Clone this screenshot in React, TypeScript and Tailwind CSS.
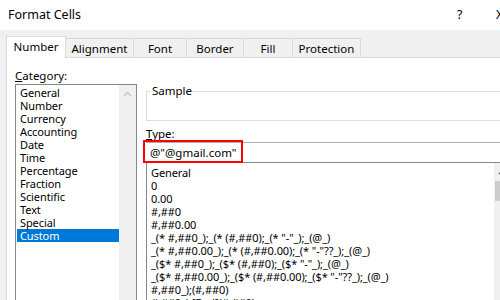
const categories = [
  "General",
  "Number",
  "Currency",
  "Accounting",
  "Date",
  "Time",
  "Percentage",
  "Fraction",
  "Scientific",
  "Text",
  "Special",
  "Custom",
];

const formats = [
  "General",
  "0",
  "0.00",
  "#,##0",
  "#,##0.00",
  '_(* #,##0_);_(* (#,##0);_(* "-"_);_(@_)',
  '_(* #,##0.00_);_(* (#,##0.00);_(* "-"??_);_(@_)',
  '_($* #,##0_);_($* (#,##0);_($* "-"_);_(@_)',
  '_($* #,##0.00_);_($* (#,##0.00);_($* "-"??_);_(@_)',
  "#,##0_);(#,##0)",
  "#,##0_);[Red](#,##0)",
];

const tabs = [
  { label: "Number", w: "w-[60px]" },
  { label: "Alignment", w: "w-[69px]" },
  { label: "Font", w: "w-[54px]" },
  { label: "Border", w: "w-[58px]" },
  { label: "Fill", w: "w-[50px]" },
  { label: "Protection", w: "w-[69px]" },
];

function ChevronUp({ color }: { color: string }) {
  return (
    <svg width="9" height="6" viewBox="0 0 9 6">
      <polyline points="1,5 4.5,1.5 8,5" fill="none" stroke={color} strokeWidth="1.3" />
    </svg>
  );
}

export default function App() {
  return (
    <div className="w-[500px] h-[300px] overflow-hidden bg-[#f0f0f0] text-black text-[11.5px] leading-[13px] font-['Noto_Sans',sans-serif]">
      {/* Title bar */}
      <div className="relative h-[30px] bg-white flex items-center pl-[8px]">
        <span className="text-[12.5px] leading-[16px]">Format Cells</span>
        <span className="absolute left-[457px] top-[7px] text-[12.5px] leading-[16px]">?</span>
        <span className="absolute left-[496px] top-[7px] text-[12.5px] leading-[16px]">X</span>
      </div>

      {/* Tabs */}
      <div className="flex items-end pl-[6px] h-[28px] -mb-px relative z-10">
        {tabs.map((t, i) =>
          i === 0 ? (
            <div
              key={t.label}
              className={`${t.w} h-[22px] bg-white border border-b-0 border-[#d9d9d9] flex items-center justify-center pb-[2px]`}
            >
              {t.label}
            </div>
          ) : (
            <div
              key={t.label}
              className={`${t.w} h-[20px] -ml-px border border-b-0 border-[#d9d9d9] flex items-center justify-center`}
            >
              {t.label}
            </div>
          )
        )}
      </div>

      {/* Panel */}
      <div className="ml-[6px] w-[520px] h-[300px] bg-white border-t border-l border-[#d9d9d9] flex pl-[8px] pt-[11px]">
        {/* Left column */}
        <div className="w-[122px] flex flex-col">
          <div className="h-[15px]">
            <u>C</u>ategory:
          </div>
          <div className="h-[240px] border border-[#828790] flex">
            <div className="flex-1 pl-px pt-px text-[11px] tracking-[-0.1px]">
              {categories.map((c) => (
                <div
                  key={c}
                  className={`h-[13px] pl-[3px] ${c === "Custom" ? "bg-[#0078d7] text-white" : ""}`}
                >
                  {c}
                </div>
              ))}
            </div>
            <div className="w-[17px] bg-[#f0f0f0] flex justify-center pt-[6px]">
              <ChevronUp color="#c3c3c3" />
            </div>
          </div>
        </div>

        {/* Right column */}
        <div className="ml-[9px] w-[370px] flex flex-col relative">
          <fieldset className="mt-[15px] h-[38px] border border-[#dcdcdc] px-[5px]">
            <legend className="px-px -ml-px leading-[14px]">Sample</legend>
          </fieldset>
          <div className="mt-[6px] h-[13px]">
            <u>T</u>ype:
          </div>
          <div className="mt-[2px] h-[20px] border-t border-[#abadb3] flex items-center pl-[4px]">
            @"@gmail.com"
          </div>
          <div className="h-[200px] border border-[#828790] flex">
            <div className="flex-1 pl-[4px] pt-[3px] text-[11px] tracking-[-0.1px]">
              {formats.map((f) => (
                <div key={f} className="h-[13px] whitespace-nowrap">
                  {f}
                </div>
              ))}
            </div>
          </div>
          {/* red highlight box */}
          <div className="absolute left-[-3px] top-[71px] w-[100px] h-[23px] border-2 border-[#ff0000]" />
          {/* scrollbar of format list */}
          <div className="absolute left-[348px] top-[94px] w-[17px] h-[200px] bg-[#f0f0f0] flex flex-col items-center">
            <div className="pt-[6px]">
              <ChevronUp color="#606060" />
            </div>
            <div className="mt-[6px] w-[15px] h-[20px] bg-[#cdcdcd]" />
          </div>
        </div>
      </div>
    </div>
  );
}
